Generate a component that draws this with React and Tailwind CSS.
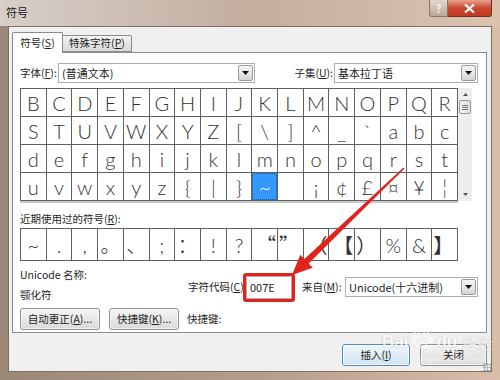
import React from "react";

const U = ({ children }) => <span className="underline underline-offset-1">{children}</span>;

function Tri() {
  return (
    <svg width="7" height="4" viewBox="0 0 7 4"><path d="M0 0H7L3.5 4Z" fill="#111" /></svg>
  );
}

function DropBtn() {
  return (
    <div className="w-[15px] self-stretch border border-[#9c9c9c] rounded-[2px] bg-gradient-to-b from-[#f4f4f4] via-[#e8e8e8] to-[#d2d2d2] flex items-center justify-center">
      <Tri />
    </div>
  );
}

function Select({ w, text }) {
  return (
    <div className={`${w} h-[20px] border border-[#abadb3] bg-white flex items-stretch p-px`}>
      <div className="flex-1 pl-[2px] leading-[16px] text-[11px]">{text}</div>
      <DropBtn />
    </div>
  );
}

function Btn({ w, children, def }) {
  return (
    <div
      className={`${w} h-[22px] rounded-[3px] border ${
        def ? "border-[#4d8fc4] from-[#f0f6fb] to-[#d2e3f0]" : "border-[#8e8f8f] from-[#f5f5f5] to-[#dadada]"
      } bg-gradient-to-b flex items-center justify-center text-[10.5px] leading-none shadow-[inset_0_0_0_1px_rgba(255,255,255,0.7)]`}
    >
      {children}
    </div>
  );
}

const rows = [
  "BCDEFGHIJKLMNOPQR".split(""),
  ["S", "T", "U", "V", "W", "X", "Y", "Z", "[", "\\", "]", "^", "_", "`", "a", "b", "c"],
  "defghijklmnopqrst".split(""),
  ["u", "v", "w", "x", "y", "z", "{", "|", "}", "~", "\u00a0", "¡", "¢", "£", "¤", "¥", "¦"],
];

const recent = [
  ["~", "c"], [".", "c"], [",", "c"], ["。", "c"], ["、", "c"], [";", "c"], ["：", "c"], ["!", "c"], ["?", "c"],
  ["“", "r"], ["”", "l"], ["（", "r"], ["【", "r"], ["）", "l"], ["%", "c"], ["&", "c"], ["】", "l"],
];

export default function App() {
  return (
    <div className="w-[500px] h-[380px] relative overflow-hidden whitespace-nowrap bg-gradient-to-r from-[#9a8878] via-[#b59c88] to-[#d9bea8] font-['Noto_Sans_CJK_SC',sans-serif] text-[10.5px] text-[#1e1e1e]">
      {/* title bar */}
      <div className="h-[26px] flex items-start bg-gradient-to-r from-[#d6cfca] via-[#c4ae9e] to-[#dcc3b0]">
        <div className="pl-[6px] pt-[4px] text-[11px] leading-[16px] text-[#1a1a1a]">符号</div>
        <div className="ml-auto mr-[8px] flex">
          <div className="w-[19px] h-[17px] rounded-bl-[3px] border border-t-0 border-[#8a7668] bg-gradient-to-b from-[#e2d6cd] to-[#bba999] flex items-center justify-center text-[11px] leading-none text-[#f6f0ea] font-bold">?</div>
          <div className="w-[44px] h-[17px] rounded-br-[3px] border border-t-0 border-l-0 border-[#7a2a1e] bg-gradient-to-b from-[#e8a190] via-[#c9462f] to-[#c23a22] flex items-center justify-center">
            <svg width="11" height="9" viewBox="0 0 11 9"><path d="M1 0.5L10 8.5M10 0.5L1 8.5" stroke="#fff" strokeWidth="2.2" /></svg>
          </div>
        </div>
      </div>

      <div className="flex px-[8px]">
        {/* client */}
        <div className="w-[484px] h-[346px] bg-[#f0f0f0] border border-[#7d6f64] pt-[5px] pl-[3px]">
          {/* tabs */}
          <div className="flex items-end h-[20px] relative z-10">
            <div className="w-[51px] h-[21px] -mb-px bg-white border border-b-0 border-[#898c95] rounded-t-[2px] flex items-center justify-center leading-none">
              符号(<U>S</U>)
            </div>
            <div className="w-[69px] h-[17px] border border-l-0 border-[#898c95] rounded-tr-[2px] bg-gradient-to-b from-[#f3f3f3] to-[#d9d9d9] flex items-center justify-center leading-none">
              特殊字符(<U>P</U>)
            </div>
          </div>
          {/* panel */}
          <div className="w-[475px] h-[281px] border border-[#898c95] bg-white pt-[10px] pl-[7px] pr-[8px]">
            {/* font row */}
            <div className="flex items-center h-[20px]">
              <div className="w-[38px]">字体(<U>F</U>):</div>
              <Select w="w-[197px]" text="(普通文本)" />
              <div className="ml-auto mr-[1px]">子集(<U>U</U>):</div>
              <Select w="w-[144px]" text="基本拉丁语" />
            </div>
            {/* grid */}
            <div className="mt-[5px] flex">
              <div className="w-[436px] h-[111px] grid grid-cols-[repeat(17,minmax(0,1fr))] grid-rows-4 gap-px bg-[#606060] p-px border-b-2 border-[#c9c9c9] box-content">
                {rows.flat().map((c, i) => {
                  const sel = c === "~";
                  return (
                    <div
                      key={i}
                      className={`flex items-center justify-center font-['Lato',sans-serif] font-light text-[20px] leading-none ${
                        sel ? "bg-[#3399ff] text-white outline outline-1 outline-dotted outline-[#1a4f8a] -outline-offset-1" : "bg-white text-[#333]"
                      }`}
                    >
                      {c}
                    </div>
                  );
                })}
              </div>
              <div className="w-[14px] h-[113px] bg-[#eeeeee] flex flex-col items-center">
                <div className="h-[12px] flex items-center justify-center">
                  <svg width="5" height="3" viewBox="0 0 5 3"><path d="M0 3H5L2.5 0Z" fill="#555" /></svg>
                </div>
                <div className="w-[12px] h-[14px] border border-[#9a9a9a] rounded-[2px] bg-gradient-to-r from-[#f6f6f6] to-[#dedede] flex flex-col items-center justify-center gap-px">
                  <div className="w-[6px] h-px bg-[#777]" />
                  <div className="w-[6px] h-px bg-[#777]" />
                  <div className="w-[6px] h-px bg-[#777]" />
                </div>
                <div className="flex-1" />
                <div className="h-[14px] flex items-center justify-center">
                  <svg width="5" height="3" viewBox="0 0 5 3"><path d="M0 0H5L2.5 3Z" fill="#555" /></svg>
                </div>
              </div>
            </div>
            {/* recent */}
            <div className="mt-[8px] h-[16px] leading-[16px]">近期使用过的符号(<U>R</U>):</div>
            <div className="mt-[1px] w-[436px] h-[31px] grid grid-cols-[repeat(17,minmax(0,1fr))] gap-px bg-[#606060] p-px box-content">
              {recent.map(([c, a], i) => (
                <div
                  key={i}
                  className={`bg-white flex items-center text-[#333] text-[20px] leading-none font-['Lato','Noto_Sans_CJK_SC',sans-serif] font-light ${
                    a === "r" ? "justify-end pr-[1px]" : a === "l" ? "justify-start pl-[1px]" : "justify-center"
                  }`}
                >
                  <span className={a === "c" ? "" : "font-['Noto_Sans_CJK_SC',sans-serif] font-normal"}>{c}</span>
                </div>
              ))}
            </div>
            {/* unicode row */}
            <div className="mt-[6px] h-[36px] flex">
              <div className="w-[168px] flex flex-col">
                <div className="h-[16px] leading-[16px]">Unicode 名称:</div>
                <div className="mt-[4px] h-[16px] leading-[16px]">颚化符</div>
              </div>
              <div className="flex-1 flex items-center pt-[4px]">
                <div className="w-[58px]">字符代码(<U>C</U>):</div>
                <div className="relative w-[46px] h-[23px] border border-[#abadb3] bg-white pl-[3px] leading-[21px] text-[11px]">
                  007E
                  <div className="absolute -left-[4px] -top-[4px] w-[52px] h-[29px] border-[3px] border-[#e2231c] rounded-[3px]" />
                </div>
                <div className="ml-[10px]">来自(<U>M</U>):</div>
                <div className="ml-auto">
                  <Select w="w-[133px]" text="Unicode(十六进制)" />
                </div>
              </div>
            </div>
            {/* buttons */}
            <div className="mt-[5px] flex items-center">
              <Btn w="w-[80px]">自动更正(<U>A</U>)...</Btn>
              <div className="ml-[9px]">
                <Btn w="w-[70px]">快捷键(<U>K</U>)...</Btn>
              </div>
              <div className="ml-[8px]">快捷键:</div>
            </div>
          </div>
          {/* bottom buttons */}
          <div className="mt-[11px] flex justify-end gap-[10px] pr-[4px]">
            <Btn w="w-[68px]" def>插入(<U>I</U>)</Btn>
            <Btn w="w-[67px]">关闭</Btn>
          </div>
        </div>
      </div>

      {/* watermark */}
      <div className="absolute left-[382px] top-[328px] flex items-end gap-[3px] text-white opacity-70 [text-shadow:0_0_2px_rgba(0,0,0,0.35)] pointer-events-none">
        <span className="font-['Liberation_Sans',sans-serif] font-bold text-[17px] leading-none">Bai</span>
        <svg width="22" height="22" viewBox="0 0 22 22">
          <g fill="none" stroke="#fff" strokeWidth="1.6">
            <ellipse cx="6" cy="6" rx="2.2" ry="3" />
            <ellipse cx="15" cy="6" rx="2.2" ry="3" />
            <ellipse cx="2.8" cy="12" rx="1.8" ry="2.4" />
            <ellipse cx="19" cy="12" rx="1.8" ry="2.4" />
            <path d="M6 19 C6 13 16 13 16 19 Z" />
          </g>
        </svg>
        <span className="font-['Liberation_Sans',sans-serif] font-bold text-[17px] leading-none">du</span>
        <span className="text-[15px] leading-none ml-[2px]">经验</span>
      </div>
      <div className="absolute left-[420px] top-[356px] text-[8px] leading-none text-white opacity-60 font-['Liberation_Sans',sans-serif] pointer-events-none">jingyan.baidu.com</div>

      {/* red arrow */}
      <svg className="absolute left-0 top-0 pointer-events-none" width="500" height="380" viewBox="0 0 500 380">
        <polygon
          points="404.6,168.6 308.6,263.4 312.7,267.7 292,275 300.3,254.7 304.4,259 403.4,167.4"
          fill="#e2231c"
        />
      </svg>

      {/* resize grip */}
      <div className="absolute right-[9px] bottom-[9px] w-[8px] h-[8px] bg-[radial-gradient(circle,#999_1px,transparent_1.2px)] bg-[length:3px_3px] opacity-70" />
    </div>
  );
}
